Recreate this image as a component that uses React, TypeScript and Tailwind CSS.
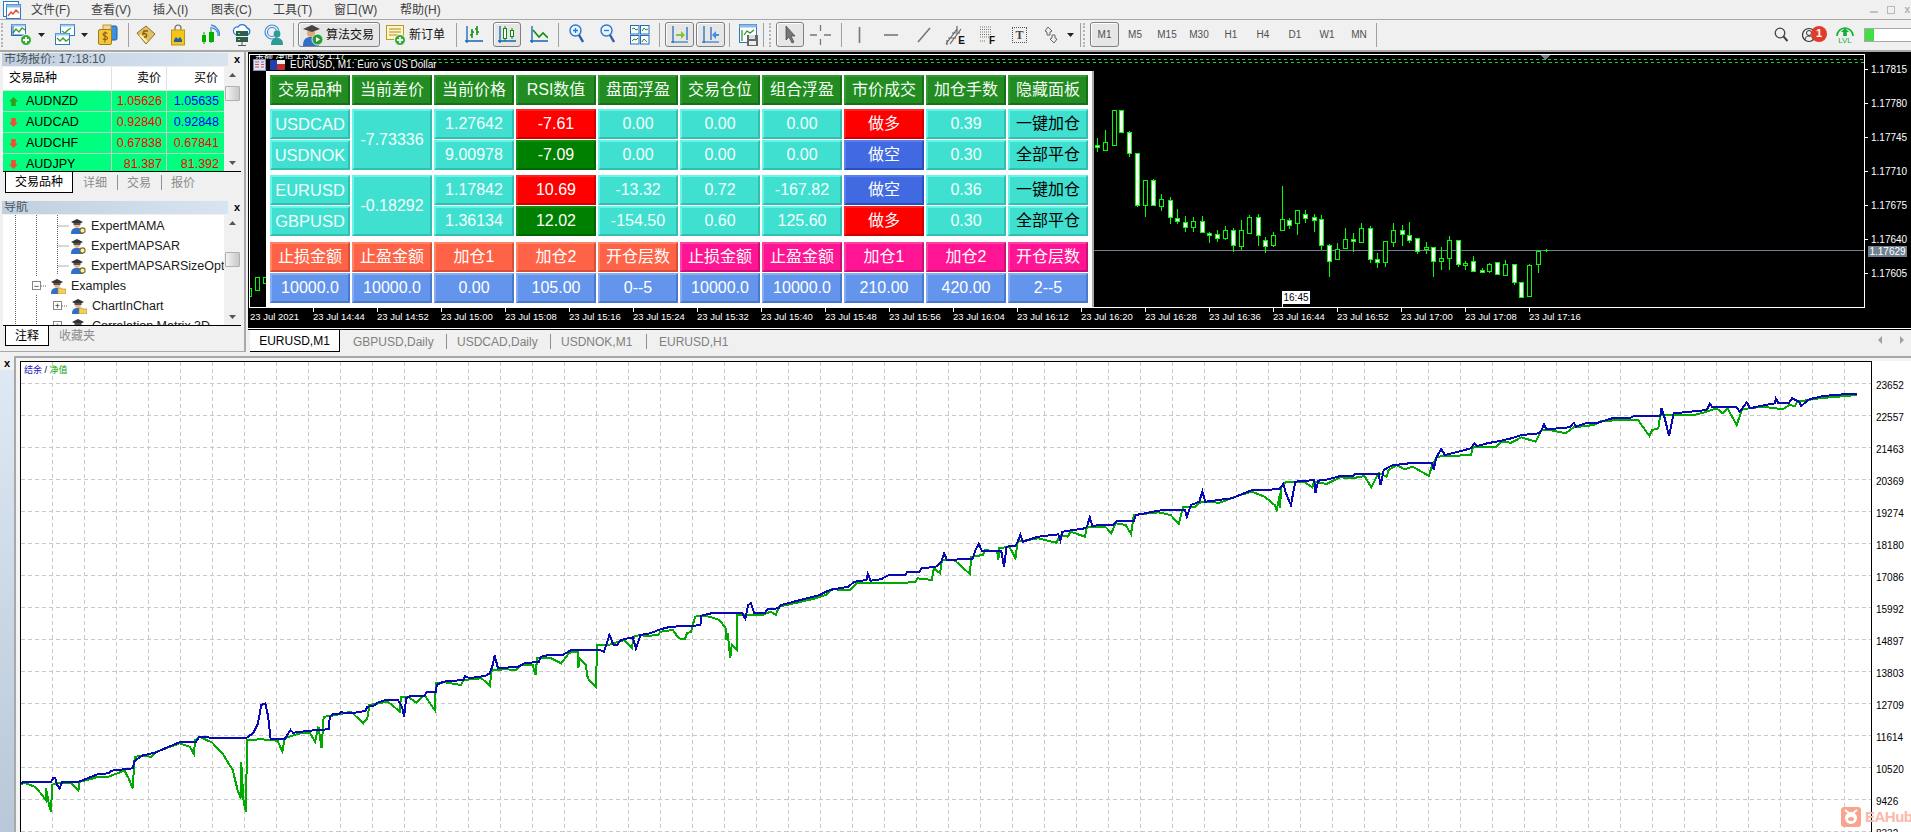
import React from 'react';

const FONT = "font-['Liberation_Sans','Noto_Sans_CJK_SC',sans-serif]";

/* ---------- small toolbar pieces ---------- */
const Sep = ({ c }: { c: string }) => <div className={`h-[24px] w-px bg-[#a0a0a0] ${c}`} />;
const Grip = ({ c = '' }: { c?: string }) => (
  <div className={`h-[24px] w-[4px] border-l-2 border-dotted border-[#b4b4b4] ${c}`} />
);
const Drop = ({ c }: { c: string }) => (
  <svg className={c} width="7" height="4" viewBox="0 0 7 4"><path d="M0 0h7L3.5 4z" fill="#222" /></svg>
);
const Pressed = ({ c, w, children }: { c: string; w: string; children: React.ReactNode }) => (
  <div className={`flex h-[25px] items-center justify-center rounded-[3px] border border-[#808080] bg-[#e6e6e6] shadow-[inset_1px_1px_0_#fff] ${w} ${c}`}>
    {children}
  </div>
);
const Ic = ({ w, h = 22, c = '', children }: { w: number; h?: number; c?: string; children: React.ReactNode }) => (
  <svg className={c} width={w} height={h} viewBox={`0 0 ${w} ${h}`} fill="none">{children}</svg>
);
const Plus = ({ x, y }: { x: number; y: number }) => (
  <g>
    <circle cx={x} cy={y} r="5.5" fill="#3aa53a" stroke="#e8ffe8" />
    <path d={`M${x - 3} ${y}h6M${x} ${y - 3}v6`} stroke="#fff" strokeWidth="1.8" />
  </g>
);
const Hat = ({ folder = false }: { folder?: boolean }) => (
  <svg width="16" height="16" viewBox="0 0 16 16" className="shrink-0">
    <path d="M1 16c0-5 2-6 6-6s6 1 6 6z" fill="#2f6fc8" />
    <circle cx="7" cy="7" r="3" fill="#e8b48a" />
    <path d="M1 4l6-3 6 3-6 3z" fill="#333" />
    <path d="M3.5 5v2h7V5z" fill="#555" />
    {folder ? (
      <path d="M8 10h3l1 1h4v5H8z" fill="#f2cf5a" stroke="#a8862a" strokeWidth=".6" />
    ) : (
      <circle cx="12.5" cy="12.5" r="2.6" fill="#f8f0b0" stroke="#7a6a20" strokeWidth="1.1" />
    )}
  </svg>
);
const WinChart = ({ zig, y = 0 }: { zig: string; y?: number }) => (
  <g transform={`translate(0 ${y})`}>
    <rect x=".5" y=".5" width="14" height="11" fill="#fff" stroke="#2a78c8" />
    <path d="M.5 .5h14v2H.5z" fill="#9cc6ee" />
    <path d={zig} stroke="#3f9f2f" strokeWidth="1.4" />
  </g>
);
const Axes = () => <path d="M3 2v17M1 17h18" stroke="#1463b8" strokeWidth="1.3" />;

/* ---------- toolbars ---------- */
function MenuBar() {
  const items: [string, string][] = [
    ['文件(F)', 'w-[60px]'], ['查看(V)', 'w-[62px]'], ['插入(I)', 'w-[58px]'], ['图表(C)', 'w-[62px]'],
    ['工具(T)', 'w-[61px]'], ['窗口(W)', 'w-[66px]'], ['帮助(H)', 'w-[60px]'],
  ];
  return (
    <div className="flex h-[20px] items-center border-b border-[#a8a8a8] text-[12px] text-[#404040]">
      <svg className="ml-[3px]" width="18" height="18" viewBox="0 0 18 18">
        <rect x=".5" y=".5" width="15" height="15" fill="#fff" stroke="#2a78c8" />
        <rect x="3.5" y="3.5" width="14" height="14" fill="#fff" stroke="#2a78c8" />
        <path d="M3.5 3.5h14v3h-14z" fill="#8dbbe8" />
        <path d="M5 15l3-4 2 2 3-4 3 3" stroke="#d8502a" fill="none" strokeWidth="1.3" />
      </svg>
      <div className="ml-[10px] flex">
        {items.map(([t, w]) => <span key={t} className={w}>{t}</span>)}
      </div>
      <div className="ml-auto mr-[1px] flex items-center gap-[9px] text-[#b0b0b0]">
        <div className="mt-[5px] h-[2px] w-[8px] bg-[#c0c0c0]" />
        <div className="h-[8px] w-[8px] border border-[#b8b8b8]" />
        <span className="text-[10px] font-bold">x</span>
      </div>
    </div>
  );
}

function TF() {
  return (
    <>
      {['M5', 'M15', 'M30', 'H1', 'H4', 'D1', 'W1', 'MN'].map((t) => (
        <span key={t} className="w-[32px] text-center text-[10px] text-[#505050]">{t}</span>
      ))}
    </>
  );
}

function Toolbar() {
  return (
    <div className="flex h-[32px] items-center border-b-2 border-[#a8a8a8] pb-[1px] pl-[1px]">
      <Grip />
      <Ic w={21} c="ml-[6px]"><WinChart zig="M2 9l3-4 3 3 3-4 3 2" /><path d="M2 2v9M2 11h12" stroke="#1463b8" /><Plus x={15} y={16} /></Ic>
      <Drop c="ml-[6px]" />
      <Ic w={20} c="ml-[10px]">
        <g transform="translate(5 0)"><WinChart zig="M2 7l3 2 3-3 3-2" /></g>
        <g transform="translate(0 9)"><WinChart zig="M2 5l3 3 3-3 3 3 3-2" /></g>
      </Ic>
      <Drop c="ml-[6px]" />
      <Ic w={20} c="ml-[10px]">
        <rect x="7" y="2" width="12" height="14" rx="1.5" fill="#3d8fe0" stroke="#1d5fa8" />
        <rect x="5" y="1" width="8" height="6" fill="#f0d890" stroke="#b89a40" />
        <rect x=".5" y="5.5" width="13" height="15" rx="1.5" fill="#f2c63c" stroke="#a37c10" />
        <path d="M9.5 9.5c-1-1.2-4.5-1-4.5 1s4.5 1.4 4.500 3.400-3.500 2.200-4.800 .8M7 7.500v11" stroke="#8a5a08" strokeWidth="1.1" />
      </Ic>
      <Sep c="ml-[10px]" />
      <Ic w={20} c="ml-[7px]">
        <path d="M1 9L10 2l9 8-9 10z" fill="#e0c060" stroke="#8a7030" />
        <path d="M4 11l7 7" stroke="#fff2b0" strokeWidth="2" />
        <path d="M12 7H8l-1 3c2-1 5 0 3 3l-2 0" stroke="#8a5a08" strokeWidth="1.4" />
      </Ic>
      <Ic w={14} c="ml-[15px]">
        <path d="M4 6V4a3 3 0 0 1 6 0v2" stroke="#666" strokeWidth="1.2" />
        <rect x=".5" y="6" width="13" height="15" fill="#f5c518" stroke="#c09810" />
        <path d="M3 16l2-3 2 2 2-2 2 3v2H3z" fill="#1f5fa8" />
      </Ic>
      <Ic w={19} c="ml-[16px]">
        <path d="M9 4a7 7 0 0 1 8 8M10 1a10 10 0 0 1 8.5 11" stroke="#3f8fd8" strokeWidth="1.3" />
        <path d="M3 8v12M10 5v14" stroke="#00a000" />
        <rect x="1" y="11" width="4" height="7" fill="#00b000" />
        <rect x="8" y="8" width="5" height="10" fill="#00b000" />
      </Ic>
      <Ic w={20} c="ml-[12px]">
        <path d="M5 11a4 4 0 0 1 1-8 5 5 0 0 1 9 1 3.6 3.6 0 0 1 0 7z" fill="#fff" stroke="#1f80d0" strokeWidth="1.3" />
        <rect x="4" y="7" width="12" height="5" fill="#2f5c50" />
        <rect x="4" y="13" width="12" height="5" fill="#2f5c50" />
        <path d="M6 9.5h2M6 15.5h2" stroke="#6cf08c" />
        <path d="M10 18v4M6 21.5h8" stroke="#555" />
      </Ic>
      <Ic w={20} c="ml-[12px]">
        <circle cx="8" cy="8" r="7" stroke="#3f8fd8" strokeWidth="1.2" />
        <circle cx="8" cy="8" r="4.5" stroke="#3f8fd8" strokeWidth="1.2" />
        <circle cx="13" cy="10" r="3.4" fill="#2c9c92" />
        <path d="M7 21c0-5 2-7 6-7s6 2 6 7z" fill="#2c9c92" />
      </Ic>
      <Sep c="ml-[9px]" />
      <div className="ml-[4px] flex h-[25px] w-[82px] items-center rounded-[3px] border border-[#808080] bg-[#e6e6e6] pl-[4px] shadow-[inset_1px_1px_0_#fff]">
        <Ic w={20}>
          <path d="M0 22c0-7 3-9 8-9s8 2 8 9z" fill="#2f6fc8" />
          <circle cx="8" cy="9" r="4" fill="#e0a878" />
          <path d="M0 5l9-4 8 4-8 3z" fill="#444" />
          <circle cx="14.5" cy="15.5" r="5.5" fill="#2a9a3a" stroke="#d8f8d8" />
          <path d="M13 13v5l4-2.5z" fill="#fff" />
        </Ic>
        <span className="ml-[3px] text-[12px] tracking-[0px] text-[#111]">算法交易</span>
      </div>
      <Ic w={21} c="ml-[6px]">
        <rect x=".5" y="1.5" width="17" height="14" fill="#fff6c8" stroke="#c09820" />
        <path d="M3 5h12M3 8h12M3 11h10" stroke="#b08a20" strokeWidth="1.2" />
        <Plus x={14} y={16} />
      </Ic>
      <span className="ml-[2px] w-[36px] text-[12px] text-[#111]">新订单</span>
      <Sep c="ml-[11px]" />
      <Ic w={20} c="ml-[7px]"><Axes /><path d="M8 5v9M6 11h2M8 8h2M13 2v9M11 5h2M13 8h2" stroke="#159015" strokeWidth="1.6" /></Ic>
      <Pressed c="ml-[9px]" w="w-[28px]">
        <Ic w={20}><Axes /><rect x="6.5" y="4.5" width="3" height="10" fill="#fff" stroke="#128a12" /><rect x="13.5" y="6.5" width="3" height="6" fill="#fff" stroke="#128a12" /><path d="M8 2v2M8 15v2M15 4v2M15 13v2" stroke="#128a12" /></Ic>
      </Pressed>
      <Ic w={19} c="ml-[8px]"><Axes /><path d="M4 6l6 7 4-4 5 5" stroke="#159015" strokeWidth="1.7" /></Ic>
      <Sep c="ml-[10px]" />
      <Ic w={15} c="ml-[10px]"><circle cx="6.5" cy="6.5" r="5.5" fill="#e8f4ff" stroke="#2a78c8" strokeWidth="1.4" /><path d="M4 6.5h5M6.5 4v5" stroke="#2a78c8" strokeWidth="1.3" /><path d="M10 11l4 7" stroke="#2a5fa8" strokeWidth="2.4" /></Ic>
      <Ic w={15} c="ml-[16px]"><circle cx="6.5" cy="6.5" r="5.5" fill="#e8f4ff" stroke="#2a78c8" strokeWidth="1.4" /><path d="M4 6.5h5" stroke="#2a78c8" strokeWidth="1.3" /><path d="M10 11l4 7" stroke="#2a5fa8" strokeWidth="2.4" /></Ic>
      <Ic w={20} c="ml-[15px]">
        <rect x=".5" y="1.5" width="8.5" height="8.5" fill="#fff" stroke="#1f6fc0" /><rect x="10.5" y="1.5" width="8.5" height="8.5" fill="#fff" stroke="#1f6fc0" />
        <rect x=".5" y="11.5" width="8.5" height="8.5" fill="#fff" stroke="#1f6fc0" /><rect x="10.5" y="11.5" width="8.5" height="8.5" fill="#fff" stroke="#1f6fc0" />
        <path d="M2 5l2-1 2 2 2-1M12 7l2-3 2 2 2-1M2 17l2-2 2 1 2-2M12 18l2-3 3 3" stroke="#208f20" />
      </Ic>
      <Sep c="ml-[9px]" />
      <Pressed c="ml-[5px]" w="w-[29px]">
        <Ic w={22}><path d="M4 2v17M2 18h17M18 3v13" stroke="#1463b8" strokeWidth="1.2" /><path d="M7 10h5V7l4 4-4 4v-3H7z" fill="#7fc832" /></Ic>
      </Pressed>
      <Pressed c="ml-[2px]" w="w-[29px]">
        <Ic w={22}><path d="M4 2v17M2 18h17M11 3v13" stroke="#1463b8" strokeWidth="1.2" /><path d="M19 10h-3V7l-4 4 4 4v-3h3z" fill="#3f8fe0" /></Ic>
      </Pressed>
      <Sep c="ml-[4px]" />
      <Ic w={19} c="ml-[9px]">
        <rect x=".5" y=".5" width="17" height="18" fill="#fff" stroke="#2a78c8" />
        <path d="M.5 .5h17v3H.5z" fill="#8dbbe8" />
        <path d="M3 6v11M5 11l3-4 3 2 4-3" stroke="#208f20" strokeWidth="1.2" />
        <rect x="8" y="11" width="11" height="11" fill="#666" /><rect x="10" y="11" width="6" height="4" fill="#ddd" /><rect x="10" y="17" width="7" height="4" fill="#eee" />
      </Ic>
      <Sep c="ml-[5px]" />
      <Grip c="ml-[5px]" />
      <Pressed c="ml-[3px]" w="w-[28px]">
        <Ic w={14}><path d="M3 2v14l3-3 3 6 2-1-3-6h4z" fill="#777" stroke="#444" strokeWidth=".7" /></Ic>
      </Pressed>
      <Ic w={21} c="ml-[6px]"><path d="M0 11h7M14 11h7M10.5 1v6M10.5 15v6" stroke="#777" strokeWidth="1.3" /></Ic>
      <Sep c="ml-[10px]" />
      <Ic w={3} c="ml-[16px]"><path d="M1.5 3v16" stroke="#777" strokeWidth="1.6" /></Ic>
      <Ic w={14} c="ml-[23px]"><path d="M0 11h14" stroke="#777" strokeWidth="1.6" /></Ic>
      <Ic w={14} c="ml-[19px]"><path d="M1 18L13 4" stroke="#777" strokeWidth="1.6" /></Ic>
      <div className="relative ml-[14px] h-[22px] w-[20px]">
        <Ic w={20}><path d="M1 20L12 5M5 20L16 5M3 14h8M7 9h8M12 2v6M2 16v5" stroke="#666" strokeWidth="1.2" /></Ic>
        <span className="absolute bottom-[0px] right-[0px] text-[10px] font-bold leading-[10px] text-[#111]">E</span>
      </div>
      <div className="relative ml-[15px] h-[22px] w-[15px]">
        <Ic w={15}><path d="M0 3h12M0 5.5h12M0 8h12M0 10.5h12M0 13h12M0 17h6" stroke="#777" strokeDasharray="1 1" /></Ic>
        <span className="absolute bottom-[0px] right-[0px] text-[10px] font-bold leading-[10px] text-[#111]">F</span>
      </div>
      <div className="ml-[17px] flex h-[16px] w-[15px] items-center justify-center border border-dotted border-[#555] font-['Liberation_Serif',serif] text-[12px] font-bold text-[#444]">T</div>
      <Ic w={15} c="ml-[17px]"><path d="M4 3l4 4-2 1v3H3V8L1 7zM10 19l-4-4 2-1v-3h3v3l2 1z" fill="#eee" stroke="#666" /></Ic>
      <Drop c="ml-[8px]" />
      <Sep c="ml-[6px]" />
      <Grip c="ml-[2px]" />
      <Pressed c="ml-[3px]" w="w-[29px]"><span className="text-[10px] text-[#505050]">M1</span></Pressed>
      <TF />
      <Sep c="ml-[1px]" />
      <div className="ml-auto flex items-center">
        <Ic w={14} h={16}><circle cx="6" cy="6" r="4.8" stroke="#444" strokeWidth="1.3" /><path d="M9.5 9.5L13.5 14" stroke="#444" strokeWidth="2" /></Ic>
        <div className="relative ml-[14px] h-[18px] w-[14px]">
          <Ic w={14} h={18}><circle cx="7" cy="9" r="6.5" stroke="#333" strokeWidth="1.2" /><circle cx="7" cy="7" r="2.5" stroke="#333" /><path d="M3 14c0-3 2-4 4-4s4 1 4 4" stroke="#333" /></Ic>
          <div className="absolute left-[9px] top-[0px] flex h-[16px] w-[16px] items-center justify-center rounded-full bg-[#e23b2a] text-[11px] font-bold text-white">1</div>
        </div>
        <div className="ml-[20px] flex w-[18px] flex-col items-center">
          <Ic w={18} h={12}><path d="M1 11a8 8 0 0 1 16 0" stroke="#10b030" strokeWidth="1.6" /><path d="M9 3l4 4h-2.2v4H7.2V7H5z" fill="#10b030" /></Ic>
          <span className="text-[8px] leading-[8px] text-[#10b030]">LVL</span>
        </div>
        <div className="ml-[10px] h-[14px] w-[47px] border-y border-l border-[#a8a8a8] bg-white">
          <div className="h-full w-[9px] bg-[#44dd44]" />
        </div>
      </div>
    </div>
  );
}

/* ---------- left column ---------- */
const PanelTitle = ({ children }: { children: React.ReactNode }) => (
  <div className="flex items-center">
    <div className="ml-[2px] h-[13px] w-[226px] overflow-hidden bg-gradient-to-r from-[#c0cfdf] to-[#d8e4f0] pl-[2px] text-[12px] leading-[13px] text-[#4a5560]">{children}</div>
    <span className="ml-[4px] w-[10px] text-center text-[11px] font-bold leading-[13px] text-black">x</span>
  </div>
);
const Scroll = ({ c }: { c: string }) => (
  <div className="relative w-[17px] shrink-0 bg-[#f0f0f0]">
    <svg className="absolute left-[5px] top-[6px]" width="7" height="4" viewBox="0 0 7 4"><path d="M0 4h7L3.500 0z" fill="#555" /></svg>
    <svg className="absolute bottom-[6px] left-[5px]" width="7" height="4" viewBox="0 0 7 4"><path d="M0 0h7L3.500 4z" fill="#555" /></svg>
    <div className={`absolute left-[1px] h-[15px] w-[15px] rounded-[1px] border border-[#b0b0b0] bg-gradient-to-r from-[#f4f4f4] to-[#c8c8c8] ${c}`} />
  </div>
);
const Arrow = ({ up }: { up: boolean }) => (
  <svg width="9" height="9" viewBox="0 0 8 8" className="shrink-0">
    {up ? <path d="M4 0l4 4H6v4H2V4H0z" fill="#30a010" /> : <path d="M4 8L0 4h2V0h4v4h2z" fill="#f05030" />}
  </svg>
);

function MarketWatch() {
  const rows: [string, boolean, string, string, string, string][] = [
    ['AUDNZD', true, '1.05626', '1.05635', 'text-[#ff0000]', 'text-[#0000ff]'],
    ['AUDCAD', false, '0.92840', '0.92848', 'text-[#ff0000]', 'text-[#0000ff]'],
    ['AUDCHF', false, '0.67838', '0.67841', 'text-[#ff0000]', 'text-[#ff0000]'],
    ['AUDJPY', false, '81.387', '81.392', 'text-[#ff0000]', 'text-[#ff0000]'],
  ];
  return (
    <div>
      <PanelTitle>市场报价: 17:18:10</PanelTitle>
      <div className="ml-[3px] mt-[1px] flex h-[104px] w-[238px] overflow-hidden">
        <div className="w-[221px] bg-white">
          <div className="flex h-[24px] items-center border-b border-[#e0e0e0] text-[12px] text-black">
            <span className="w-[109px] border-r border-[#e0e0e0] pl-[6px] leading-[23px]">交易品种</span>
            <span className="w-[55px] border-r border-[#e0e0e0] pr-[5px] text-right leading-[23px]">卖价</span>
            <span className="w-[56px] pr-[5px] text-right leading-[23px]">买价</span>
          </div>
          {rows.map(([s, up, a, b, ca, cb]) => (
            <div key={s} className="flex h-[21px] items-center border-b border-[#c8c8c8] bg-[#00ff7f] text-[12.5px]">
              <div className="flex h-full w-[109px] items-center border-r border-[#c8c8c8] pl-[6px]">
                <Arrow up={up} />
                <span className="ml-[8px] text-black">{s}</span>
              </div>
              <span className={`flex h-full w-[55px] items-center justify-end border-r border-[#c8c8c8] pr-[4px] ${ca}`}>{a}</span>
              <span className={`flex h-full w-[56px] items-center justify-end pr-[4px] ${cb}`}>{b}</span>
            </div>
          ))}
        </div>
        <Scroll c="top-[19px]" />
      </div>
      <div className="ml-[3px] flex h-[22px] w-[238px] items-center border-t border-black text-[12px] text-[#8c8c8c]">
        <div className="ml-[2px] flex h-[21px] w-[68px] items-center justify-center border-x border-b border-black bg-white text-black">交易品种</div>
        <span className="ml-[10px] w-[24px]">详细</span>
        <div className="ml-[10px] h-[15px] w-px bg-[#909090]" />
        <span className="ml-[9px] w-[24px]">交易</span>
        <div className="ml-[10px] h-[15px] w-px bg-[#909090]" />
        <span className="ml-[9px] w-[24px]">报价</span>
      </div>
    </div>
  );
}

function Navigator() {
  const rows: { t: string; pl: string; box?: string; folder?: boolean }[] = [
    { t: 'ExpertMAMA', pl: 'pl-[67px]' },
    { t: 'ExpertMAPSAR', pl: 'pl-[67px]' },
    { t: 'ExpertMAPSARSizeOptimized', pl: 'pl-[67px]' },
    { t: 'Examples', pl: 'pl-[47px]', box: '−', folder: true },
    { t: 'ChartInChart', pl: 'pl-[68px]', box: '+', folder: true },
    { t: 'Correlation Matrix 3D', pl: 'pl-[68px]', box: '+', folder: true },
  ];
  return (
    <div className="mt-[8px]">
      <PanelTitle>导航</PanelTitle>
      <div className="ml-[3px] mt-[1px] flex h-[110px] w-[238px] overflow-hidden">
        <div className="relative w-[221px] overflow-hidden bg-white pt-[1px]">
          <svg className="absolute left-0 top-0" width="221" height="110" fill="none" stroke="#666" strokeDasharray="1 1">
            <path d="M12.500 0v110M33.500 0v62M54.500 0v60M54.500 11h11M54.500 31h11M54.500 51h11M38 71h6M59 91h6" />
            <path d="M33.500 80v30" />
          </svg>
          {rows.map((r) => (
            <div key={r.t} className={`relative flex h-[20px] items-center text-[12.5px] whitespace-nowrap text-[#202020] ${r.pl}`}>
              {r.box && (
                <span className={`absolute top-[5px] flex h-[9px] w-[9px] items-center justify-center border border-[#888] bg-white text-[9px] leading-[8px] ${r.t === 'Examples' ? 'left-[29px]' : 'left-[50px]'}`}>{r.box}</span>
              )}
              <Hat folder={r.folder} />
              <span className="ml-[5px]">{r.t}</span>
            </div>
          ))}
        </div>
        <Scroll c="top-[37px]" />
      </div>
      <div className="ml-[3px] flex h-[21px] w-[238px] items-center border-t border-black text-[12px] text-[#8c8c8c]">
        <div className="ml-[2px] flex h-[20px] w-[44px] items-center justify-center border-x border-b border-black bg-white text-black">注释</div>
        <span className="ml-[10px]">收藏夹</span>
      </div>
    </div>
  );
}

/* ---------- trading panel ---------- */
type V = 'hdr' | 'tq' | 'red' | 'grn' | 'blu' | 'tom' | 'pink' | 'corn' | 'tqk';
const vs: Record<V, string> = {
  hdr: 'bg-[#228b22] border-t-[#2f9d2f] border-l-[#2f9d2f] border-b-[#176f17] border-r-[#176f17] text-[#f4fff4]',
  tq: 'bg-[#40e0d0] border-t-[#66f5e8] border-l-[#66f5e8] border-b-[#30bfb0] border-r-[#30bfb0] text-[#f2fffd]',
  tqk: 'bg-[#40e0d0] border-t-[#66f5e8] border-l-[#66f5e8] border-b-[#30bfb0] border-r-[#30bfb0] text-black',
  red: 'bg-[#ff0000] border-t-[#ff2020] border-l-[#ff2020] border-b-[#cc0000] border-r-[#cc0000] text-white',
  grn: 'bg-[#008000] border-t-[#109010] border-l-[#109010] border-b-[#006400] border-r-[#006400] text-white',
  blu: 'bg-[#4169e1] border-t-[#5a80f0] border-l-[#5a80f0] border-b-[#2b4fc0] border-r-[#2b4fc0] text-white',
  tom: 'bg-[#ff6347] border-t-[#ff8468] border-l-[#ff8468] border-b-[#d84f38] border-r-[#d84f38] text-white',
  pink: 'bg-[#ff1493] border-t-[#ff40a8] border-l-[#ff40a8] border-b-[#cc1076] border-r-[#cc1076] text-white',
  corn: 'bg-[#6495ed] border-t-[#86adf4] border-l-[#86adf4] border-b-[#4a78cc] border-r-[#4a78cc] text-white',
};
const Cell = ({ t, v, tall, big }: { t: string; v: V; tall?: boolean; big?: boolean }) => (
  <div className={`flex items-center justify-center border-2 whitespace-nowrap ${big ? 'text-[16.5px]' : 'text-[16px]'} ${tall ? 'row-span-2' : ''} ${vs[v]}`}>{t}</div>
);
const Group = ({ c, children }: { c: string; children: React.ReactNode }) => (
  <div className={`grid auto-rows-[30px] grid-cols-[repeat(10,80px)] gap-x-[2px] gap-y-px ${c}`}>{children}</div>
);

function TradePanel() {
  return (
    <div className="absolute left-[16px] top-[16px] h-[236px] w-[828px] border-r-2 border-[#a8a8a8] bg-white pl-[4px] pt-[4px]">
      <Group c="">
        {['交易品种', '当前差价', '当前价格', 'RSI数值', '盘面浮盈', '交易仓位', '组合浮盈', '市价成交', '加仓手数', '隐藏面板'].map((t) => <Cell key={t} t={t} v="hdr" />)}
      </Group>
      <Group c="mt-[4px]">
        <Cell t="USDCAD" v="tq" big /><Cell t="-7.73336" v="tq" tall /><Cell t="1.27642" v="tq" /><Cell t="-7.61" v="red" /><Cell t="0.00" v="tq" /><Cell t="0.00" v="tq" /><Cell t="0.00" v="tq" /><Cell t="做多" v="red" /><Cell t="0.39" v="tq" /><Cell t="一键加仓" v="tqk" />
        <Cell t="USDNOK" v="tq" big /><Cell t="9.00978" v="tq" /><Cell t="-7.09" v="grn" /><Cell t="0.00" v="tq" /><Cell t="0.00" v="tq" /><Cell t="0.00" v="tq" /><Cell t="做空" v="blu" /><Cell t="0.30" v="tq" /><Cell t="全部平仓" v="tqk" />
      </Group>
      <Group c="mt-[5px]">
        <Cell t="EURUSD" v="tq" big /><Cell t="-0.18292" v="tq" tall /><Cell t="1.17842" v="tq" /><Cell t="10.69" v="red" /><Cell t="-13.32" v="tq" /><Cell t="0.72" v="tq" /><Cell t="-167.82" v="tq" /><Cell t="做空" v="blu" /><Cell t="0.36" v="tq" /><Cell t="一键加仓" v="tqk" />
        <Cell t="GBPUSD" v="tq" big /><Cell t="1.36134" v="tq" /><Cell t="12.02" v="grn" /><Cell t="-154.50" v="tq" /><Cell t="0.60" v="tq" /><Cell t="125.60" v="tq" /><Cell t="做多" v="red" /><Cell t="0.30" v="tq" /><Cell t="全部平仓" v="tqk" />
      </Group>
      <Group c="mt-[6px]">
        {['止损金额', '止盈金额', '加仓1', '加仓2', '开仓层数'].map((t) => <Cell key={t} t={t} v="tom" />)}
        {['止损金额', '止盈金额', '加仓1', '加仓2', '开仓层数'].map((t) => <Cell key={'p' + t} t={t} v="pink" />)}
        {['10000.0', '10000.0', '0.00', '105.00', '0--5', '10000.0', '10000.0', '210.00', '420.00', '2--5'].map((t, i) => <Cell key={i} t={t} v="corn" />)}
      </Group>
    </div>
  );
}

/* ---------- candles ---------- */
const C: [number, number, number, number, number, 0 | 1][] = [
  [14,265,305,286,292,1],[29,240,300,277,299,0],[45,181,284,181,284,0],[60,181,245,181,245,1],[75,243,320,247,308,1],[90,308,470,308,465,1],[106,391,500,391,464,0],[121,388,464,391,464,1],[136,432,483,448,467,0],[152,442,522,451,500,1],[167,478,522,503,512,1],[182,498,545,515,530,1],[197,502,547,512,530,0],[213,498,550,512,545,1],[228,545,578,548,556,1],[243,540,575,553,563,1],[258,528,570,539,563,0],[274,535,605,539,584,1],[289,510,600,541,587,0],[304,495,552,502,548,0],[320,492,588,502,556,1],[335,560,608,571,587,1],[350,545,590,556,584,0],[366,408,540,508,539,0],[381,505,538,511,526,1],[396,480,555,481,520,0],[411,480,518,493,503,1],[427,492,545,502,509,1],[442,495,600,508,584,1],[457,582,680,584,634,1],[472,580,628,596,626,0],[488,534,596,568,593,0],[503,548,605,568,572,1],[518,518,575,535,575,0],[534,528,640,535,626,1],[549,610,653,626,637,1],[564,574,650,574,635,0],[579,519,590,541,575,0],[595,525,587,541,553,1],[610,516,580,556,569,1],[625,565,612,565,604,1],[641,575,612,592,598,0],[656,590,680,592,632,1],[671,590,660,625,632,0],[686,558,660,571,625,0],[702,571,650,571,643,1],[717,632,660,638,645,0],[732,618,665,632,664,1],[748,655,670,660,665,1],[763,640,670,643,663,0],[778,637,673,637,673,1],[793,630,675,643,674,0],[809,643,705,643,695,1],[824,697,742,697,742,1],[839,643,740,646,737,0],[855,601,668,604,643,0],
];
// plot-local coordinates: plot box starts at page (250,55)
const cx = (X: number) => Math.round(1090 + X / 1.91 - 250);
const cy = (Y: number) => Math.round(50 + Y / 3 - 55);

function Plot() {
  return (
    <div className="relative h-[254px] w-[1616px] border border-white">
      <svg className="absolute left-0 top-0" width="1614" height="252" shapeRendering="crispEdges">
        <path d="M92 4.500H1614" stroke="#22c83c" strokeDasharray="3 3" />
        <path d="M183 7.500H1614" stroke="#22c83c" strokeDasharray="3 3" />
        <path d="M1290 0h10l-5 5z" fill="#708090" />
        {/* candles left of the panel */}
        <g stroke="#00ff00" fill="#000">
          <rect x="-1" y="233.500" width="2" height="8" />
          <rect x="5.500" y="222.500" width="4" height="13" />
          <rect x="13.500" y="222.500" width="3" height="6" />
        </g>
        <path d="M844 195.500H1614" stroke="#708090" />
        {C.map(([X, wt, wb, bt, bb, f], i) => {
          const x = cx(X);
          return (
            <g key={i}>
              <path d={`M${x + 0.5} ${cy(wt)}V${cy(wb)}`} stroke="#00ff00" />
              <rect x={x - 2 + 0.5} y={cy(bt) + 0.5} width="4" height={Math.max(2, cy(bb) - cy(bt))} fill={f ? '#fff' : '#000'} stroke="#00ff00" />
            </g>
          );
        })}
        <path d="M1294 195.500h4M1296 194v3" stroke="#00ff00" />
      </svg>
      <div className="absolute left-[5px] top-[-1px] h-[5px] w-[90px] overflow-hidden whitespace-nowrap text-[9px] leading-[5px] text-white">余额 净值 1:36 多 1:17:822</div>
      <div className="absolute left-[3px] top-[4px] flex items-center">
        <svg width="33" height="12" viewBox="0 0 33 12">
          <rect x=".5" y=".5" width="12" height="11" fill="#dde4f5" stroke="#8090c0" />
          <path d="M2 3h4M8 3h3M2 5.500h4M8 5.500h3M2 8h4M8 8h3" stroke="#d05050" />
          <rect x="17" y="1" width="7" height="10" fill="#2040b0" />
          <rect x="24" y="1" width="8" height="10" fill="#c03030" />
          <path d="M24 1h8v4h-8z" fill="#eee" />
        </svg>
        <span className="ml-[4px] whitespace-nowrap text-[10px] leading-[12px] text-white">EURUSD, M1:  Euro vs US Dollar</span>
      </div>
      <div className="absolute left-[1032px] top-[236px] flex h-[13px] w-[28px] items-center justify-center bg-white text-[10px] text-black">16:45</div>
      <div className="absolute left-[1032px] top-[249px] h-[3px] w-px bg-white" />
      <TradePanel />
    </div>
  );
}

function PriceAxis() {
  const ps = ['1.17815', '1.17780', '1.17745', '1.17710', '1.17675', '1.17640', '1.17605'];
  return (
    <div className="relative -mt-[2px] flex-1 text-[10px] text-white">
      {ps.map((p) => (
        <div key={p} className="flex h-[34px] items-center">
          <div className="h-px w-[3px] bg-white" />
          <span className="ml-[3px]">{p}</span>
        </div>
      ))}
      <div className="absolute left-[3px] top-[194px] flex h-[11px] w-[39px] items-center justify-center bg-[#708090] text-white">1.17629</div>
    </div>
  );
}

function TimeAxis() {
  const ts = ['14:44','14:52','15:00','15:08','15:16','15:24','15:32','15:40','15:48','15:56','16:04','16:12','16:20','16:28','16:36','16:44','16:52','17:00','17:08','17:16'];
  return (
    <div className="flex h-[21px] items-start text-[9.5px] leading-[18px] whitespace-nowrap text-white">
      <span className="ml-[1px] w-[63px] shrink-0">23 Jul 2021</span>
      {ts.map((t) => (
        <span key={t} className="relative w-[64px] shrink-0">
          <span className="absolute left-0 top-0 h-[4px] w-px bg-white" />
          23 Jul {t}
        </span>
      ))}
    </div>
  );
}

function ChartTabs() {
  return (
    <div className="relative flex h-[26px] items-start border-t border-black text-[12px] text-[#808080]">
      <div className="ml-[2px] flex h-[22px] w-[90px] items-center justify-center border-r border-b border-black bg-white text-black">EURUSD,M1</div>
      <span className="ml-[13px] mt-[3px] w-[80px] whitespace-nowrap">GBPUSD,Daily</span>
      <div className="ml-[13px] mt-[4px] h-[15px] w-px bg-[#909090]" />
      <span className="ml-[10px] mt-[3px] w-[81px] whitespace-nowrap">USDCAD,Daily</span>
      <div className="ml-[12px] mt-[4px] h-[15px] w-px bg-[#909090]" />
      <span className="ml-[10px] mt-[3px] w-[75px] whitespace-nowrap">USDNOK,M1</span>
      <div className="ml-[10px] mt-[4px] h-[15px] w-px bg-[#909090]" />
      <span className="ml-[12px] mt-[3px] whitespace-nowrap">EURUSD,H1</span>
      <div className="ml-auto mr-[7px] mt-[6px] flex gap-[18px]">
        <svg width="4" height="8" viewBox="0 0 4 8"><path d="M4 0v8L0 4z" fill="#a0a0a0" /></svg>
        <svg width="4" height="8" viewBox="0 0 4 8"><path d="M0 0v8l4-4z" fill="#a0a0a0" /></svg>
      </div>
    </div>
  );
}

/* ---------- equity chart ---------- */
type P = [number, number][];
const blue8: P = [[48,1300],[60,1296],[125,1296],[130,1285],[135,1283],[140,1305],[146,1315],[152,1297],[190,1296],[215,1285],[240,1272],[268,1270],[272,1262],[325,1255],[330,1232],[350,1216],[380,1208],[410,1192],[440,1177],[480,1175],[488,1161],[510,1161],[515,1164],[603,1164],[620,1150],[632,1120],[640,1065],[650,1060],[657,1100],[663,1166],[698,1166],[712,1140],[718,1148],[775,1140],[805,1138],[808,1100],[815,1092],[830,1092],[835,1087],[860,1090],[895,1083],[900,1070],[915,1068],[925,1058],[945,1050],[975,1050],[985,1070],[990,1100],[995,1045],[1005,1038],[1040,1038],[1045,1027],[1068,1026],[1070,1005],[1085,995],[1135,990],[1140,978],[1150,985],[1190,977],[1200,970],[1207,945],[1212,917],[1220,955],[1270,950],[1285,940],[1320,935],[1325,920],[1345,915],[1380,915],[1385,910],[1400,900],[1470,900],[1480,905],[1485,885],[1493,855],[1503,885],[1512,885],[1520,870],[1550,862],[1558,895],[1568,860]];
const blue9: P = [[0,855],[25,850],[50,838],[75,830],[125,828],[148,825],[150,797],[175,790],[250,788],[258,806],[265,765],[272,760],[280,790],[305,790],[312,778],[340,775],[345,765],[400,748],[440,735],[465,720],[510,710],[525,695],[555,690],[558,672],[565,692],[590,688],[610,675],[650,675],[655,665],[685,665],[690,655],[725,650],[738,635],[745,610],[752,630],[815,626],[822,600],[830,582],[838,603],[885,602],[892,650],[898,590],[920,587],[925,575],[932,555],[938,575],[975,560],[1025,553],[1030,572],[1035,545],[1090,535],[1095,530],[1102,502],[1108,527],[1160,524],[1170,512],[1210,512],[1215,495],[1280,480],[1335,480],[1340,500],[1350,465],[1370,455],[1378,425],[1385,455],[1450,445],[1500,420],[1568,418]];
const blue10: P = [[0,415],[8,402],[15,430],[27,465],[38,395],[85,390],[88,430],[95,392],[120,388],[150,378],[182,378],[185,372],[245,371],[250,405],[258,360],[280,345],[310,342],[320,340],[378,338],[382,360],[388,325],[400,297],[410,315],[450,303],[475,295],[483,280],[490,288],[515,280],[550,272],[575,265],[600,255],[645,250],[650,240],[656,222],[662,238],[720,232],[730,218],[735,230],[760,220],[790,218],[830,203],[870,204],[880,198],[945,198],[948,175],[955,200],[967,258],[978,190],[1060,180],[1068,162],[1075,172],[1135,172],[1142,185],[1160,157],[1168,175],[1205,165],[1230,160],[1232,145],[1238,158],[1265,158],[1272,145],[1290,155],[1295,168],[1315,148],[1350,138],[1400,133],[1433,132]];
const green8: P = [[48,1305],[60,1298],[85,1310],[100,1330],[112,1350],[113,1315],[120,1365],[125,1385],[128,1305],[140,1298],[175,1300],[192,1322],[195,1295],[215,1290],[240,1280],[265,1280],[305,1262],[315,1285],[325,1315],[330,1220],[350,1218],[370,1220],[385,1205],[440,1180],[465,1190],[475,1212],[478,1170],[490,1160],[520,1178],[545,1210],[570,1260],[582,1320],[590,1345],[591,1235],[597,1360],[603,1385],[605,1170],[640,1168],[680,1172],[692,1205],[697,1165],[735,1150],[760,1150],[772,1175],[780,1130],[788,1195],[793,1100],[810,1098],[860,1085],[890,1120],[900,1105],[905,1065],[950,1055],[980,1085],[982,1040],[1000,1040],[1020,1058],[1040,1035],[1048,1050],[1065,1080],[1068,1000],[1090,997],[1130,1005],[1135,990],[1180,985],[1200,1007],[1205,960],[1240,958],[1265,960],[1275,945],[1305,945],[1312,975],[1316,925],[1350,925],[1375,940],[1395,908],[1415,905],[1417,955],[1420,925],[1435,945],[1440,985],[1460,1012],[1463,885],[1490,885],[1530,870],[1548,895],[1553,860],[1568,855]];
const green9: P = [[0,855],[15,858],[45,855],[50,845],[80,840],[95,865],[110,868],[115,850],[125,845],[135,800],[150,797],[170,800],[195,810],[210,835],[210,870],[215,850],[221,925],[225,885],[237,900],[238,795],[300,795],[320,785],[333,795],[340,770],[395,755],[430,745],[455,735],[470,718],[515,720],[530,700],[640,700],[675,695],[680,685],[715,690],[720,655],[735,670],[740,630],[770,630],[808,672],[812,620],[840,615],[845,600],[875,605],[878,630],[880,595],[905,590],[920,625],[925,575],[975,565],[1020,578],[1030,555],[1048,560],[1055,545],[1090,560],[1095,530],[1140,530],[1155,550],[1165,520],[1190,525],[1203,552],[1210,495],[1270,487],[1300,495],[1320,522],[1330,472],[1360,470],[1375,455],[1420,458],[1470,435],[1500,425],[1530,440],[1555,465],[1560,480],[1568,430]];
const green10: P = [[0,475],[3,410],[15,395],[60,395],[80,412],[85,395],[115,402],[150,382],[180,385],[210,378],[227,412],[240,380],[245,368],[265,380],[270,360],[290,345],[310,358],[330,350],[370,378],[378,345],[390,320],[420,318],[475,315],[480,290],[535,292],[550,275],[575,278],[600,262],[635,275],[650,240],[670,240],[710,250],[730,232],[780,225],[800,212],[890,210],[918,258],[925,240],[940,235],[945,195],[1030,195],[1060,185],[1085,175],[1100,190],[1112,175],[1135,225],[1148,178],[1200,170],[1250,178],[1265,165],[1280,168],[1285,155],[1340,145],[1433,135]];
const conv = (p: P, x0: number, s: number) => p.map(([x, y]) => `${(x0 + x / s - 21).toFixed(1)},${(350 + y / 3 - 362).toFixed(1)}`).join(' ');
const line = (a: P, b: P, c: P) => `${conv(a, 0, 2.45)} ${conv(b, 640, 2.45)} ${conv(c, 1280, 2.485)}`;

function Equity() {
  const hs = Array.from({ length: 15 }, (_, i) => 21.5 + 32 * i);
  const vs2 = Array.from({ length: 57 }, (_, i) => 31.5 + 32 * i);
  const labels = ['23652','22557','21463','20369','19274','18180','17086','15992','14897','13803','12709','11614','10520','9426','8332'];
  return (
    <div className="flex flex-1 border-l-2 border-t-2 border-[#a8a8a8] bg-[#f4f4f4] pl-[4px] pt-[3px]">
      <div className="relative h-[600px] w-[1852px] border-x border-t border-black bg-white">
        <svg className="absolute left-0 top-0" width="1850" height="480" fill="none">
          {hs.map((y) => <path key={y} d={`M0 ${y}H1850`} stroke="#c8c8c8" strokeDasharray="4 3" />)}
          {vs2.map((x) => <path key={x} d={`M${x} 0V480`} stroke="#c8c8c8" strokeDasharray="4 3" />)}
          <polyline points={line(green8, green9, green10)} stroke="#00aa00" strokeWidth="2" shapeRendering="crispEdges" />
          <polyline points={line(blue8, blue9, blue10)} stroke="#0808b4" strokeWidth="2" shapeRendering="crispEdges" />
        </svg>
        <div className="absolute left-[3px] top-[2px] text-[9px] leading-[12px]">
          <span className="text-[#2020c0]">结余</span>
          <span className="text-black"> / </span>
          <span className="text-[#00aa00]">净值</span>
        </div>
      </div>
      <div className="bg-white pl-[4px] pt-[8px] text-[10px] text-black">
        {labels.map((l) => <div key={l} className="flex h-[32px] w-[36px] items-center">{l}</div>)}
      </div>
    </div>
  );
}

export default function App() {
  return (
    <div className={`relative flex h-[832px] w-[1911px] flex-col overflow-hidden bg-[#f0f0f0] ${FONT}`}>
      <MenuBar />
      <Toolbar />
      <div className="flex h-[304px]">
        <div className="h-[300px] w-[246px] shrink-0 border-b border-r-2 border-[#a8a8a8] pt-[1px]">
          <MarketWatch />
          <Navigator />
        </div>
        <div className="ml-[2px] flex flex-1 flex-col">
          <div className="flex h-[276px] flex-col bg-black pl-px pt-[2px]">
            <div className="flex">
              <Plot />
              <PriceAxis />
            </div>
            <TimeAxis />
          </div>
          <div className="h-px bg-white" />
          <ChartTabs />
        </div>
      </div>
      <div className="flex flex-1 overflow-hidden">
        <div className="flex w-[14px] shrink-0 flex-col bg-gradient-to-b from-[#dfeaf5] to-[#b8c8d8]">
          <div className="flex h-[14px] items-center justify-center bg-[#f0f0f0] text-[11px] font-bold leading-[11px] text-black">x</div>
        </div>
        <Equity />
      </div>
      <div className="absolute left-[1841px] top-[807px] flex items-center">
        <svg width="20" height="20" viewBox="0 0 20 20">
          <rect width="20" height="20" rx="3" fill="#f9a48e" />
          <circle cx="10" cy="11" r="6" fill="#fff" />
          <ellipse cx="10" cy="12" rx="3" ry="2" fill="#f9a48e" />
          <path d="M4 3l4 3M16 3l-4 3" stroke="#fff" strokeWidth="2" />
        </svg>
        <span className="ml-[4px] text-[15px] font-bold leading-[20px] tracking-[-0.5px] text-[#fbb8a8]">EAHub</span>
      </div>
    </div>
  );
}
